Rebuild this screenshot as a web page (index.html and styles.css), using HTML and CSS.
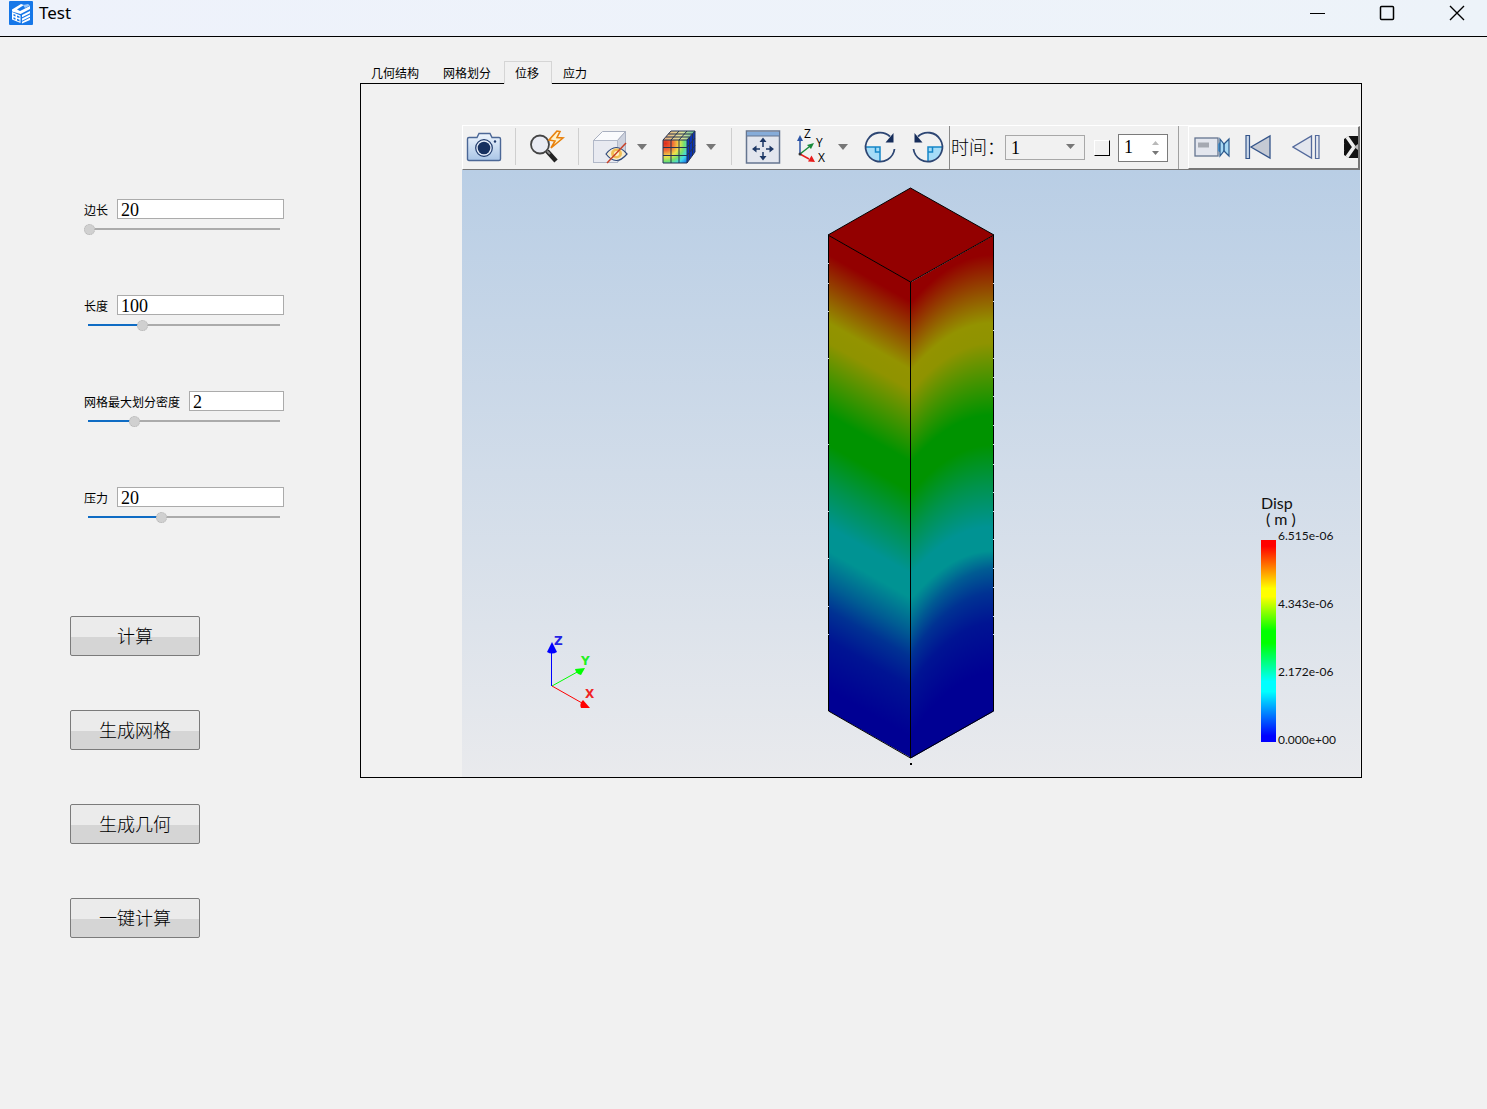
FILE: index.html
```html
<!DOCTYPE html>
<html lang="zh-CN">
<head>
<meta charset="utf-8">
<meta name="viewport" content="width=device-width, initial-scale=1">
<title>Test</title>
<link rel="stylesheet" href="styles.css">
</head>
<body>
<header class="titlebar">
  <svg class="logo" width="24" height="24" viewBox="0 0 24 24" aria-hidden="true">
    <rect width="24" height="24" rx="1" fill="#1677e8"/>
    <path d="M3 8.500 12 3l3 1-7 4.500 3 1.500L21 5v3l-9.500 5L3 10.500z" fill="#fff"/>
    <path d="M14 4l5-1 2 1.500-5 2.500z" fill="#9cc8fa"/>
    <path d="M3 11l8.500 3.500V22L3 18.500z" fill="#fff"/>
    <path d="M4.500 13l2 .8v1.700l-2-.8zM8 14.400l2.500 1v1.700L8 16.200zM4.500 16.200l2 .8v1.700l-2-.8zM8 17.700l2.500 1v1.700L8 19.500z" fill="#1677e8"/>
    <path d="M13 14l8-4v2.200L13 16.200zM13 17.500l8-4v2.200l-8 4zM13 20.800l8-4V19l-8 3.500z" fill="#fff"/>
  </svg>
  <h1 class="title">Test</h1>
  <div class="window-controls">
    <button class="window-button" type="button" aria-label="最小化"><svg width="16" height="16"><path d="M1 8.500h15" stroke="#000"/></svg></button>
    <button class="window-button" type="button" aria-label="最大化"><svg width="16" height="16"><rect x="1.500" y="1.500" width="13" height="13" rx="1" fill="none" stroke="#000" stroke-width="1.500"/></svg></button>
    <button class="window-button" type="button" aria-label="关闭"><svg width="16" height="16"><path d="M1 1l14 14M15 1L1 15" stroke="#000" stroke-width="1.400"/></svg></button>
  </div>
</header>

<main class="workspace">
  <aside class="sidebar">
    <form class="params">
      <div class="param">
        <div class="param-row"><label for="side">边长</label><input class="param-text" id="side" type="text" value="20"></div>
        <input class="slider" type="range" aria-label="边长" min="0" max="100" value="0" style="--fill:0%">
      </div>
      <div class="param">
        <div class="param-row"><label for="length">长度</label><input class="param-text" id="length" type="text" value="100"></div>
        <input class="slider" type="range" aria-label="长度" min="0" max="100" value="28" style="--fill:28%">
      </div>
      <div class="param">
        <div class="param-row"><label for="density">网格最大划分密度</label><input class="param-text" id="density" type="text" value="2"></div>
        <input class="slider" type="range" aria-label="网格最大划分密度" min="0" max="100" value="24" style="--fill:24%">
      </div>
      <div class="param">
        <div class="param-row"><label for="pressure">压力</label><input class="param-text" id="pressure" type="text" value="20"></div>
        <input class="slider" type="range" aria-label="压力" min="0" max="100" value="38" style="--fill:38%">
      </div>
    </form>
    <div class="actions">
      <button class="action" type="button">计算</button>
      <button class="action" type="button">生成网格</button>
      <button class="action" type="button">生成几何</button>
      <button class="action" type="button">一键计算</button>
    </div>
  </aside>

  <section class="results">
    <div class="tabs" role="tablist">
      <button class="tab" type="button" role="tab">几何结构</button>
      <button class="tab" type="button" role="tab">网格划分</button>
      <button class="tab tab-active" type="button" role="tab" aria-selected="true">位移</button>
      <button class="tab" type="button" role="tab">应力</button>
    </div>
    <div class="panel">
      <div class="toolbar">
        <div class="tools">
          <button class="tool" type="button" aria-label="截图">
            <svg width="36" height="36" viewBox="0 0 36 36">
              <defs><linearGradient id="body" x2="0" y2="1"><stop stop-color="#eef5fd"/><stop offset="1" stop-color="#a9c5e6"/></linearGradient></defs>
              <path d="M3 8.500h8l2-4h11l2 4h7q1.500 0 1.500 1.500v20q0 1.500-1.500 1.500H3q-1.500 0-1.500-1.500V10q0-1.500 1.500-1.500z" fill="url(#body)" stroke="#4b6796" stroke-width="1.400"/>
              <circle cx="18" cy="19" r="8.300" fill="#e6eefa" stroke="#1f3a6b" stroke-width="1.200"/>
              <circle cx="18" cy="19" r="6.300" fill="#16305f"/><circle cx="29" cy="12.500" r="1.200" fill="#1f3a6b"/>
            </svg>
          </button>
          <span class="sep"></span>
          <button class="tool" type="button" aria-label="快速缩放">
            <svg width="36" height="36" viewBox="0 0 36 36">
              <path d="M18 22l9 10" stroke="#222" stroke-width="4.500"/><path d="M17 21l4 4" stroke="#888" stroke-width="2"/>
              <circle cx="11" cy="15.500" r="9" fill="#e9ebf3" stroke="#444" stroke-width="1.800"/>
              <path d="M28 2l-8 9 6 1-4 7 12-10-6-.5 3-6z" fill="#fff1c9" stroke="#e8810c" stroke-width="1.600"/>
            </svg>
          </button>
          <span class="sep"></span>
          <div class="tool-group">
            <button class="tool" type="button" aria-label="隐藏">
              <svg width="36" height="36" viewBox="0 0 36 36">
                <path d="M1.500 11.500l9-9h23l-8 9z" fill="#fafbfd" stroke="#a9b0c0"/><path d="M25.500 11.500l8-9v21l-8 10z" fill="#cdd2de" stroke="#a9b0c0"/>
                <rect x="1.500" y="11.500" width="24" height="22" fill="#e8eaf1" stroke="#b1b8c8"/>
                <path d="M14 25q10-13 21 0-11 13-21 0z" fill="#f6ecd0" stroke="#2d477b" stroke-width="1.200"/>
                <ellipse cx="24.500" cy="24.500" rx="5.500" ry="5" fill="#f1bd55"/><circle cx="24.500" cy="24.500" r="2.500" fill="#fff3cd"/>
                <path d="M15 34l19-20" stroke="#c84127" stroke-width="1.500"/>
              </svg>
            </button>
            <button class="drop" type="button" aria-label="更多隐藏选项"><svg width="10" height="6"><path d="M0 0h10L5 6z" fill="#777"/></svg></button>
          </div>
          <div class="tool-group">
            <button class="tool" type="button" aria-label="云图">
              <svg width="36" height="36" viewBox="0 0 36 36">
                <defs>
                  <radialGradient id="map" cx="0.100" cy="0.150" r="1.200"><stop stop-color="#e02a1c"/><stop offset=".25" stop-color="#ee6a35"/><stop offset=".48" stop-color="#ede34b"/><stop offset=".65" stop-color="#74e06d"/><stop offset=".82" stop-color="#3fd8ee"/><stop offset="1" stop-color="#1675ea"/></radialGradient>
                  <linearGradient id="top"><stop stop-color="#ecaa78"/><stop offset=".6" stop-color="#dfe39a"/><stop offset="1" stop-color="#58c39a"/></linearGradient>
                </defs>
                <path d="M2 11l8-9h24l-8 9z" fill="url(#top)"/><path d="M26 11l8-9v21l-8 11z" fill="#0c35b5"/>
                <rect x="2" y="11" width="24" height="23" fill="url(#map)"/>
                <path d="M2 11h24v23H2zM10 11v23M18 11v23M2 18.500h24M2 26.500h24M2 11l8-9h24l-8 9M10 11l8-9M18 11l8-9M5 8h23.500v22M7.500 5h24v22M26 34l8-11V2M26 18.500l8-9.500M26 26.500l8-10" fill="none" stroke="#243352"/>
              </svg>
            </button>
            <button class="drop" type="button" aria-label="更多云图选项"><svg width="10" height="6"><path d="M0 0h10L5 6z" fill="#777"/></svg></button>
          </div>
          <span class="sep"></span>
          <button class="tool" type="button" aria-label="适应窗口">
            <svg width="36" height="36" viewBox="0 0 36 36">
              <rect x="1.500" y="2" width="33" height="32" fill="#e3e6ee" stroke="#657590" stroke-width="1.500"/><path d="M2 3h32v4H2z" fill="#86acd9"/><path d="M2 7h32" stroke="#657590"/>
              <path d="M18 11v7M18 23v6M9 20h6M21 20h6" stroke="#1d3765" stroke-width="1.500"/>
              <path d="M18 8.500l3.500 4.500h-7zM18 31.500l3.500-4.500h-7zM7 20l4.500-3.500v7zM29 20l-4.500-3.500v7z" fill="#1d3765"/>
            </svg>
          </button>
          <div class="tool-group">
            <button class="tool" type="button" aria-label="视图方向">
              <svg class="axes-icon" width="36" height="40" viewBox="0 0 36 40">
                <path d="M7 27V12" stroke="#2b53a5" stroke-width="1.500"/><path d="M7 8l3 6H4z" fill="#2b53a5"/>
                <path d="M7 27l9-7" stroke="#178a3a" stroke-width="1.500"/><path d="M21 16l-3 6-4-4z" fill="#178a3a"/>
                <path d="M7 27l9 5" stroke="#e81c1c" stroke-width="1.500"/><path d="M22 35l-7-.5 3.500-6z" fill="#e81c1c"/><circle cx="7" cy="27" r="1.500" fill="#333"/>
                <text x="11" y="11">Z</text><text x="23" y="20">Y</text><text x="25" y="35">X</text>
              </svg>
            </button>
            <button class="drop" type="button" aria-label="更多视图选项"><svg width="10" height="6"><path d="M0 0h10L5 6z" fill="#777"/></svg></button>
          </div>
          <button class="tool" type="button" aria-label="顺时针旋转">
            <svg width="36" height="36" viewBox="0 0 36 36">
              <path d="M4 18h14v14Q5 31 4 18z" fill="#a5dcf7"/><path d="M3 18h15v14M13.500 18v5H18" fill="none" stroke="#1686c8" stroke-width="1.500"/>
              <path d="M28 7.500A14.500 14.500 0 1 0 32.500 20" fill="none" stroke="#2d4673" stroke-width="1.800"/><path d="M31.500 4v9.500h-8z" fill="#162d5a"/>
            </svg>
          </button>
          <button class="tool" type="button" aria-label="逆时针旋转">
            <svg width="36" height="36" viewBox="0 0 36 36">
              <path d="M32 18H18v14q13-1 14-14z" fill="#a5dcf7"/><path d="M33 18H18v14M22.500 18v5H18" fill="none" stroke="#1686c8" stroke-width="1.500"/>
              <path d="M8 7.500A14.500 14.500 0 1 1 3.500 20" fill="none" stroke="#2d4673" stroke-width="1.800"/><path d="M4.500 4v9.500h8z" fill="#162d5a"/>
            </svg>
          </button>
        </div>
        <div class="time">
          <label class="time-label" for="time">时间：</label>
          <span class="select-wrap">
            <select class="time-select" id="time"><option>1</option></select>
            <svg class="select-arrow" width="9" height="5" aria-hidden="true"><path d="M0 0h9L4.500 5z" fill="#777"/></svg>
          </span>
          <input class="check" type="checkbox" aria-label="循环">
          <span class="spin-wrap">
            <input class="spin" type="number" aria-label="步长" value="1">
            <svg class="spin-arrows" width="7" height="14" aria-hidden="true"><path d="M0 4h7L3.500 0z" fill="#b9b9b9"/><path d="M0 10h7l-3.500 4z" fill="#777"/></svg>
          </span>
        </div>
        <div class="player">
          <button class="play-tool" type="button" aria-label="录制">
            <svg width="36" height="24" viewBox="0 0 36 24"><rect x="1" y="3" width="23" height="18" fill="#e3e6ee" stroke="#657590" stroke-width="1.300"/><rect x="4" y="7.500" width="11" height="5" fill="#a5a9b2"/><path d="M24 9l3-3v12l-3-2z" fill="#4a90c8"/><path d="M26 4l4 5 5-5v17l-5-5-4 5z" fill="#a8daf4" stroke="#2c5a8d" stroke-width="1.200"/><path d="M30 9v7" stroke="#2c5a8d" stroke-width="1.500"/></svg>
          </button>
          <button class="play-tool" type="button" aria-label="第一帧">
            <svg width="28" height="26" viewBox="0 0 28 26"><path d="M2 1.500h3.500v23H2z" fill="#cbd9ea" stroke="#35558a" stroke-width="1.200"/><path d="M26 2v22L7 13z" fill="#c5cad4" stroke="#35558a" stroke-width="1.300"/></svg>
          </button>
          <button class="play-tool" type="button" aria-label="上一帧">
            <svg width="28" height="26" viewBox="0 0 28 26"><path d="M23.500 1.500H27v23h-3.500z" fill="#e7ebf3" stroke="#53699b" stroke-width="1.200"/><path d="M19.500 2v22L1 13z" fill="#e3e6ee" stroke="#53699b" stroke-width="1.300"/></svg>
          </button>
          <button class="more" type="button" aria-label="更多">
            <svg width="14" height="22" viewBox="0 0 14 22"><path d="M5 0h9v22H5l-5-3v-4l3-4-3-4V3z" fill="#111"/><path d="M3 1l7 10-7 10" fill="none" stroke="#eee" stroke-width="3.500"/><path d="M0 7l6 4-6 4z" fill="#111"/><path d="M14 8v6l-4-3z" fill="#bbb"/></svg>
          </button>
        </div>
      </div>
      <div class="viewport">
        <canvas class="model" id="model" width="168" height="580"></canvas>
        <svg class="triad" width="70" height="80" viewBox="0 0 70 80">
          <path d="M16.500 55V20" stroke="#00f"/><path d="M17 11l5 10q-5 3-10 0z" fill="#00f"/>
          <path d="M17 55l27-15" stroke="#0f0"/><path d="M50 37l-4 7q-5-1-6-6z" fill="#0f0"/>
          <path d="M17 55l30 17" stroke="#f00"/><path d="M55 77h-9q-2-4 2-8z" fill="#f00"/>
          <text x="19" y="14" fill="#2323e6">Z</text><text x="46" y="34" fill="#23f023">Y</text><text x="50" y="67" fill="#f02323">X</text>
        </svg>
        <div class="legend">
          <div class="legend-title"><span>Disp</span><span class="unit">( m )</span></div>
          <div class="scale">
            <div class="scale-bar"></div>
            <div class="scale-labels"><span>6.515e-06</span><span>4.343e-06</span><span>2.172e-06</span><span>0.000e+00</span></div>
          </div>
        </div>
      </div>
    </div>
  </section>
</main>
<script src="model.js"></script>
</body>
</html>
```
FILE: styles.css
```css
* { box-sizing: border-box; }

body {
  margin: 0;
  min-height: 100vh;
  background: #f1f1f1;
  color: #000;
  font-family: "Noto Sans CJK SC", sans-serif;
  font-size: 12px;
}

button {
  border: 0;
  padding: 0;
  background: none;
  color: inherit;
  font: inherit;
}

svg { display: block; }

/* Title bar */
.titlebar {
  display: flex;
  align-items: center;
  height: 37px;
  padding: 0 0 10px 9px;
  border-bottom: 1px solid #000;
  background: linear-gradient(90deg, #eef2fb, #edf3f9);
}

.title {
  margin: 0 auto 0 6px;
  font: 400 17px/24px "Noto Sans", sans-serif;
}

.window-controls { display: flex; gap: 10px; }

.window-button {
  display: flex;
  align-items: center;
  justify-content: center;
  width: 60px;
  height: 26px;
}

/* Main areas */
.workspace {
  display: grid;
  grid-template-columns: 360px 1fr;
  padding-right: 125px;
}

.sidebar { padding: 162px 76px 0 70px; }

.params {
  display: flex;
  flex-direction: column;
  gap: 56px;
  padding-left: 14px;
}

.param-row {
  display: flex;
  align-items: center;
  gap: 9px;
  height: 20px;
}

.param-row label { white-space: nowrap; }

.param-text {
  flex: 1;
  min-width: 0;
  height: 20px;
  padding: 2px 3px 0;
  border: 1px solid #ababab;
  background: #fff;
  font: 18px/18px "Liberation Serif", serif;
}

.slider {
  display: block;
  width: 100%;
  height: 20px;
  margin: 0;
  appearance: none;
  background:
    linear-gradient(#0f6cc4, #0f6cc4) 4px 9px / var(--fill) 2px no-repeat,
    linear-gradient(#ababab, #ababab) 4px 9px / calc(100% - 8px) 2px no-repeat;
}

.slider::-webkit-slider-thumb {
  appearance: none;
  width: 11px;
  height: 11px;
  border: 1px dotted #b4b4b4;
  border-radius: 50%;
  background: #d0d0d0;
}

.actions {
  display: flex;
  flex-direction: column;
  align-items: flex-start;
  gap: 54px;
  padding-top: 89px;
}

.action {
  width: 130px;
  height: 40px;
  padding-bottom: 2px;
  border: 1px solid #7b7b7b;
  border-radius: 2px;
  background: linear-gradient(#ebebeb 52%, #d5d5d5 52%);
  font-size: 18px;
  font-weight: 300;
}

/* Tabs */
.results { padding-top: 24px; min-width: 0; }

.tabs {
  display: flex;
  height: 23px;
}

.tab {
  padding: 0 12px 2px 10px;
  border: 1px solid transparent;
  border-bottom: 0;
}

.tab-active {
  position: relative;
  border-color: #d5d5d5;
  background: #f1f1f1;
}

.panel {
  margin-top: -1px;
  padding: 41px 1px 0 101px;
  border: 1px solid #000;
}

/* Toolbar */
.toolbar {
  display: flex;
  height: 45px;
  border: 1px solid #fff;
  border-right: 0;
  border-bottom-color: #777;
}

.tools {
  display: flex;
  flex-shrink: 0;
  align-items: center;
  gap: 6px;
  padding-bottom: 2px;
  border-right: 1px solid #8a8a8a;
}

.tool, .drop, .more {
  display: flex;
  align-items: center;
  justify-content: center;
}

.tool { width: 42px; height: 40px; }
.drop { width: 21px; height: 40px; }
.tool-group { display: flex; }

.sep {
  width: 1px;
  height: 37px;
  margin: 0 4px;
  background: #cfcfcf;
}

.axes-icon { font: 12px "Open Sans", sans-serif; }

.time {
  display: flex;
  flex-shrink: 0;
  align-items: center;
  width: 229px;
  padding-left: 1px;
  border-right: 1px solid #a0a0a0;
}

.time-label {
  width: 54px;
  padding-bottom: 4px;
  font-size: 18px;
  font-weight: 300;
}

.select-wrap, .spin-wrap { position: relative; }

.time-select {
  display: block;
  width: 80px;
  height: 25px;
  padding: 0 5px;
  border: 1px solid #a8a8a8;
  border-radius: 0;
  appearance: none;
  background: #f1f1f1;
  color: #000;
  font: 18px/22px "Liberation Serif", serif;
}

.select-arrow {
  position: absolute;
  top: 9px;
  right: 10px;
}

.check {
  appearance: none;
  width: 16px;
  height: 16px;
  margin: 0 8px 0 9px;
  border: 1px solid #fff;
  border-right: 1px solid #000;
  border-bottom: 1px solid #000;
}

.spin {
  display: block;
  width: 50px;
  height: 28px;
  padding: 0 5px;
  border: 1px solid #7b7b7b;
  border-radius: 0;
  appearance: textfield;
  background: #fff;
  font: 18px/26px "Liberation Serif", serif;
}

.spin::-webkit-inner-spin-button { appearance: none; margin: 0; }

.spin-arrows {
  position: absolute;
  top: 7px;
  right: 9px;
}

.player {
  display: flex;
  flex: 1;
  align-items: center;
  min-width: 0;
  margin-left: 9px;
  padding-bottom: 2px;
  border: 1px solid #fff;
  border-right: 2px solid #777;
  border-bottom-color: #777;
}

.play-tool {
  display: flex;
  align-items: center;
  justify-content: center;
  flex-shrink: 0;
  width: 48px;
  height: 36px;
}

.play-tool:first-child { width: 45px; }
.more { margin-left: auto; }

/* 3D view */
.viewport {
  position: relative;
  display: flex;
  justify-content: center;
  padding: 17px 0 10px;
  background: linear-gradient(#b9cee5, #e9eaed);
}

.model { display: block; }

.triad {
  position: absolute;
  bottom: 66px;
  left: 73px;
  font: bold 12px "DejaVu Sans", sans-serif;
}

.legend {
  position: absolute;
  right: 20px;
  bottom: 29px;
  width: 79px;
  color: #111;
  font-family: Lato, sans-serif;
}

.legend-title {
  display: flex;
  flex-direction: column;
  padding-bottom: 1px;
  font-size: 16px;
  line-height: 16px;
}

.unit { padding-left: 5px; }

.scale { display: flex; gap: 2px; }

.scale-bar {
  width: 15px;
  height: 202px;
  margin-top: 12px;
  background: linear-gradient(#f00, #f00 3%, #ff0 24%, #ff0 28%, #0f0 45%, #0f0 51%, #0ff 70%, #0ff 75%, #00f 97%);
}

.scale-labels {
  display: flex;
  flex-direction: column;
  justify-content: space-between;
  height: 220px;
  font-size: 12px;
  line-height: 16px;
}
```
FILE: model.js
```js
// Displacement contour on a square column, drawn in isometric view.
const ctx = document.getElementById("model").getContext("2d");
const left = 1, mid = 84, right = 167;
const shoulder = 48, front = 95, height = 476;
const stops = [
  [0, "#930000"], [20, "#930000"], [50, "#934000"], [88, "#939300"], [108, "#8f9300"],
  [145, "#459300"], [180, "#009300"], [210, "#009300"], [250, "#00934c"],
  [292, "#009393"], [316, "#009393"], [351, "#005c93"], [375, "#003293"],
  [405, "#001493"], [455, "#000093"], [476, "#000093"]
];

for (let x = left; x < right; x++) {
  const isRight = x >= mid;
  const s = isRight ? (x - mid) / (right - mid) : (mid - x) / (mid - left);
  const top = front - (front - shoulder) * s;
  const bend = isRight ? -50 * s * (1 - s) : 0;
  const lift = isRight ? 18 * Math.sqrt(s) : 0;
  const fill = ctx.createLinearGradient(0, top + bend, 0, top + bend + height);
  stops.forEach(([y, color]) => {
    const shift = y > 320 && y < height ? lift : 0;
    fill.addColorStop((y - shift) / height, color);
  });
  ctx.fillStyle = fill;
  ctx.fillRect(x, top, 1, height);
}

ctx.beginPath();
ctx.moveTo(left, shoulder);
ctx.lineTo(mid - 0.5, 1);
ctx.lineTo(right, shoulder);
ctx.lineTo(mid - 0.5, front);
ctx.closePath();
ctx.fillStyle = "#930000";
ctx.fill();
ctx.strokeStyle = "#000";
ctx.stroke();

ctx.beginPath();
ctx.moveTo(left + 0.5, shoulder);
ctx.lineTo(left + 0.5, shoulder + height);
ctx.lineTo(mid - 0.5, front + height);
ctx.lineTo(right - 0.5, shoulder + height);
ctx.lineTo(right - 0.5, shoulder);
ctx.moveTo(mid - 0.5, front);
ctx.lineTo(mid - 0.5, front + height);
ctx.stroke();
ctx.fillStyle = "#000";
ctx.fillRect(mid - 1, front + height + 5, 2, 2);

// Mesh nodes showing through the outer edges
ctx.fillStyle = "#d5dde6";
[76, 96, 124, 171, 257, 324, 371, 419, 447].forEach(y => ctx.fillRect(left, y, 1, 1));
[96, 114, 143, 171, 190, 209, 238, 257, 277, 305, 324, 352, 381, 400, 429, 447]
  .forEach(y => ctx.fillRect(right - 1, y, 1, 1));
```
